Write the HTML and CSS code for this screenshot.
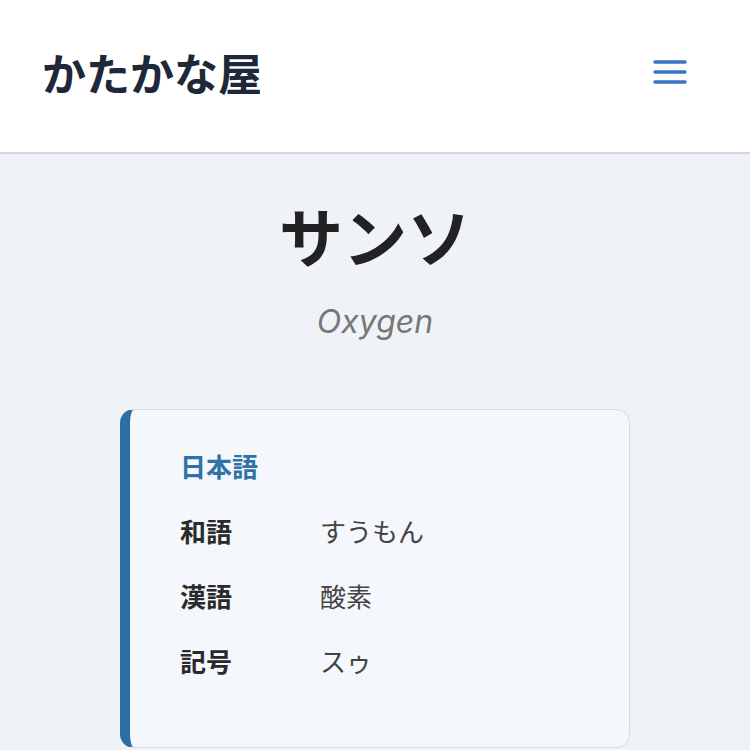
FILE: index.html
```html
<!DOCTYPE html>
<html lang="ja">
<head>
<meta charset="utf-8">
<link rel="stylesheet" href="styles.css">
</head>
<body>

<header class="site-header">
  <h1 class="site-title">かたかな屋</h1>
  <button class="menu-btn" aria-label="メニュー">
    <svg width="36" height="28" viewBox="0 0 36 28">
      <path d="M3 4h30M3 14h30M3 24h30" stroke="#3a76c4" stroke-width="3.4" stroke-linecap="round"/>
    </svg>
  </button>
</header>

<main class="word">
  <h2 class="word-kana">サンソ</h2>
  <p class="word-en">Oxygen</p>

  <section class="card">
    <h3 class="card-title">日本語</h3>
    <dl class="info">
      <div class="info-row">
        <dt>和語</dt>
        <dd>すうもん</dd>
      </div>
      <div class="info-row">
        <dt>漢語</dt>
        <dd>酸素</dd>
      </div>
      <div class="info-row">
        <dt>記号</dt>
        <dd>スゥ</dd>
      </div>
    </dl>
  </section>
</main>

</body>
</html>
```

FILE: styles.css
```css
body {
  margin: 0;
  background-color: #eff3f8;
  font-family: "Noto Sans CJK JP", "Noto Sans", sans-serif;
  color: #222;
}

.site-header {
  display: flex;
  align-items: center;
  justify-content: space-between;
  box-sizing: border-box;
  height: 154px;
  padding: 0 62px 8px 42px;
  background-color: #fff;
  border-bottom: 2px solid #d5d8dc;
}

.site-title {
  margin: 0;
  font-size: 44px;
  font-weight: 700;
  color: #1e2838;
}

.menu-btn {
  background: none;
  border: none;
  padding: 0;
  display: flex;
}

.word {
  display: flex;
  flex-direction: column;
  align-items: center;
  padding-top: 32px;
}

.word-kana {
  margin: 0;
  font-size: 64px;
  font-weight: 700;
  line-height: 96px;
  color: #222;
}

.word-en {
  margin: 20px 0 0 0;
  font-family: "Inter", "Liberation Sans", sans-serif;
  font-style: italic;
  font-size: 32px;
  color: #777;
}

.card {
  box-sizing: border-box;
  width: 510px;
  margin-top: 68px;
  padding: 36px 40px 66px 50px;
  background-color: #f4f7fb;
  border: 1px solid #d8dde4;
  border-left: 10px solid #2e6ea6;
  border-radius: 14px;
}

.card-title {
  margin: 0;
  font-size: 26px;
  font-weight: 700;
  color: #2e72a8;
  line-height: 40px;
}

.info {
  margin: 25px 0 0 0;
  display: flex;
  flex-direction: column;
  gap: 25px;
}

.info-row {
  display: flex;
  font-size: 26px;
  line-height: 40px;
}

.info-row dt {
  width: 140px;
  font-weight: 700;
  color: #2a2a2a;
}

.info-row dd {
  margin: 0;
  color: #444;
}
```
